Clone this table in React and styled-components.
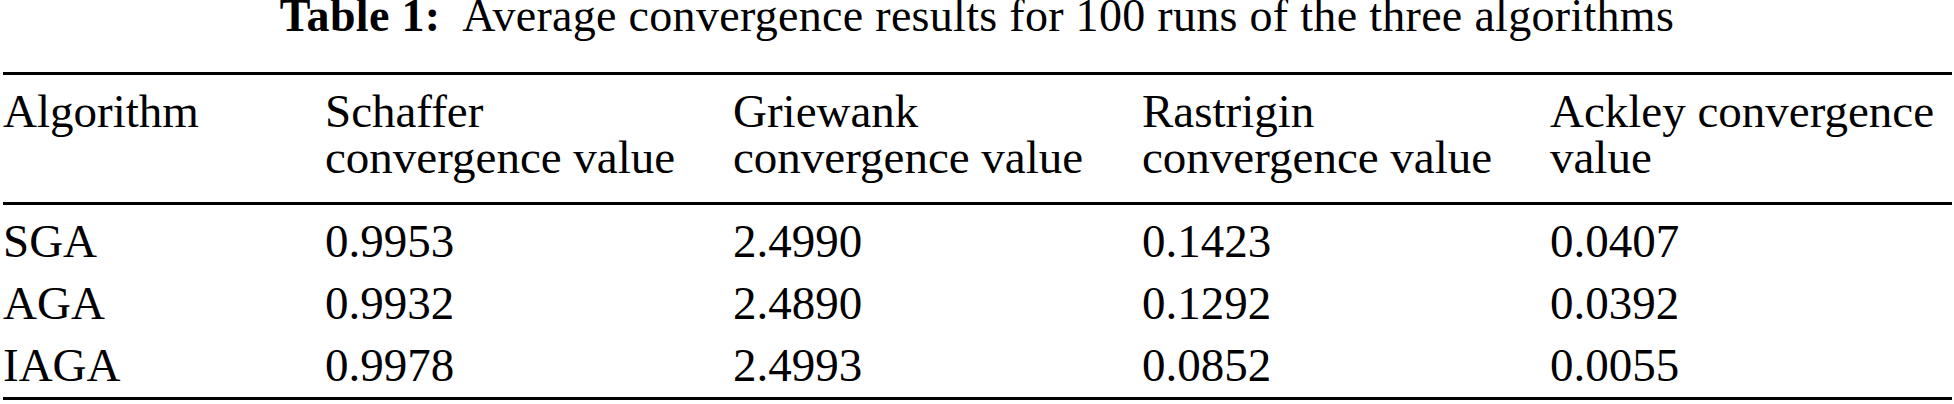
import React from "react";
import styled, { createGlobalStyle } from "styled-components";

const GlobalStyle = createGlobalStyle`
  html, body {
    margin: 0;
    padding: 0;
    background: #fff;
  }
  body {
    font-family: "Liberation Serif", "Times New Roman", serif;
    color: #000;
  }
`;

const rows = [
  ["SGA", "0.9953", "2.4990", "0.1423", "0.0407"],
  ["AGA", "0.9932", "2.4890", "0.1292", "0.0392"],
  ["IAGA", "0.9978", "2.4993", "0.0852", "0.0055"],
];

const Page = styled.div`
  width: 1954px;
  padding: 0 0 0 3px;
  box-sizing: border-box;
`;

const Caption = styled.div`
  margin-left: -3px;
  text-align: center;
  font-size: 46px;
  letter-spacing: 0.3px;
  line-height: 32px;
  height: 32px;
  margin-bottom: 40px;
  white-space: nowrap;

  strong {
    font-weight: bold;
    margin-right: 22px;
  }
`;

const Table = styled.table`
  width: 1949px;
  table-layout: fixed;
  border-collapse: collapse;
  border-top: 3px solid #000;
  border-bottom: 3px solid #000;
  font-size: 47px;
  line-height: 46px;
`;

const HeadRow = styled.tr`
  border-bottom: 3px solid #000;
`;

const HeadCell = styled.th`
  font-weight: normal;
  text-align: left;
  vertical-align: top;
  padding: 13px 0 22px 0;
`;

const Row = styled.tr``;

const Cell = styled.td`
  text-align: left;
  padding: 13px 0 ${(p) => (p.$last ? "9px" : "3px")} 0;
  white-space: nowrap;
`;

export default function App() {
  return (
    <Page>
      <GlobalStyle />
      <Caption>
        <strong>Table 1:</strong>Average convergence results for 100 runs of the three algorithms
      </Caption>
      <Table>
        <colgroup>
          <col style={{ width: 322 }} />
          <col style={{ width: 408 }} />
          <col style={{ width: 409 }} />
          <col style={{ width: 408 }} />
          <col style={{ width: 402 }} />
        </colgroup>
        <thead>
          <HeadRow>
            <HeadCell>Algorithm</HeadCell>
            <HeadCell>
              Schaffer
              <br />
              convergence value
            </HeadCell>
            <HeadCell>
              Griewank
              <br />
              convergence value
            </HeadCell>
            <HeadCell>
              Rastrigin
              <br />
              convergence value
            </HeadCell>
            <HeadCell>
              Ackley convergence
              <br />
              value
            </HeadCell>
          </HeadRow>
        </thead>
        <tbody>
          {rows.map((r, i) => (
            <Row key={r[0]}>
              {r.map((v, j) => (
                <Cell key={j} $last={i === rows.length - 1}>
                  {v}
                </Cell>
              ))}
            </Row>
          ))}
        </tbody>
      </Table>
    </Page>
  );
}
